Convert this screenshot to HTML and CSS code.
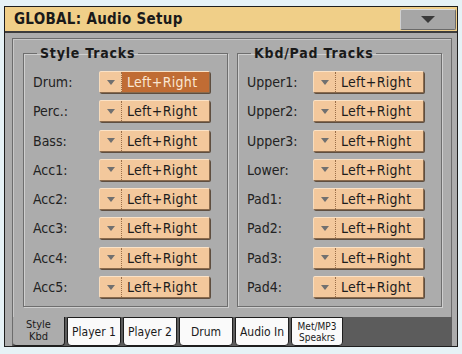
FILE: index.html
```html
<!DOCTYPE html>
<html lang="en">
<head>
    <meta charset="UTF-8">
    <meta name="viewport" content="width=device-width, initial-scale=1.0">
    <title>GLOBAL: Audio Setup</title>
    <link rel="stylesheet" href="styles.css">
</head>
<body>
    <div class="screen">
        <header class="titlebar">
            <h1 class="title">GLOBAL: Audio Setup</h1>
            <button class="menu-btn">
                <svg width="14" height="7" viewBox="0 0 14 7"><path d="M0 0H14L7 7Z" fill="#3a3a3a"/></svg>
            </button>
        </header>

        <div class="page">
            <fieldset class="group">
                <legend>Style Tracks</legend>
                <div class="row"><span class="label">Drum:</span><div class="select active"><span class="arrow"></span><span class="value">Left+Right</span></div></div>
                <div class="row"><span class="label">Perc.:</span><div class="select"><span class="arrow"></span><span class="value">Left+Right</span></div></div>
                <div class="row"><span class="label">Bass:</span><div class="select"><span class="arrow"></span><span class="value">Left+Right</span></div></div>
                <div class="row"><span class="label">Acc1:</span><div class="select"><span class="arrow"></span><span class="value">Left+Right</span></div></div>
                <div class="row"><span class="label">Acc2:</span><div class="select"><span class="arrow"></span><span class="value">Left+Right</span></div></div>
                <div class="row"><span class="label">Acc3:</span><div class="select"><span class="arrow"></span><span class="value">Left+Right</span></div></div>
                <div class="row"><span class="label">Acc4:</span><div class="select"><span class="arrow"></span><span class="value">Left+Right</span></div></div>
                <div class="row"><span class="label">Acc5:</span><div class="select"><span class="arrow"></span><span class="value">Left+Right</span></div></div>
            </fieldset>

            <fieldset class="group">
                <legend>Kbd/Pad Tracks</legend>
                <div class="row"><span class="label">Upper1:</span><div class="select"><span class="arrow"></span><span class="value">Left+Right</span></div></div>
                <div class="row"><span class="label">Upper2:</span><div class="select"><span class="arrow"></span><span class="value">Left+Right</span></div></div>
                <div class="row"><span class="label">Upper3:</span><div class="select"><span class="arrow"></span><span class="value">Left+Right</span></div></div>
                <div class="row"><span class="label">Lower:</span><div class="select"><span class="arrow"></span><span class="value">Left+Right</span></div></div>
                <div class="row"><span class="label">Pad1:</span><div class="select"><span class="arrow"></span><span class="value">Left+Right</span></div></div>
                <div class="row"><span class="label">Pad2:</span><div class="select"><span class="arrow"></span><span class="value">Left+Right</span></div></div>
                <div class="row"><span class="label">Pad3:</span><div class="select"><span class="arrow"></span><span class="value">Left+Right</span></div></div>
                <div class="row"><span class="label">Pad4:</span><div class="select"><span class="arrow"></span><span class="value">Left+Right</span></div></div>
            </fieldset>
        </div>

        <nav class="tabs">
            <div class="tab selected two-line">Style<br>Kbd</div>
            <div class="tab">Player 1</div>
            <div class="tab">Player 2</div>
            <div class="tab">Drum</div>
            <div class="tab">Audio In</div>
            <div class="tab small">Met/MP3<br>Speakrs</div>
        </nav>
    </div>
</body>
</html>
```

FILE: styles.css
```css
:root {
    --panel: #acacac;
    --title: #f0cf88;
    --peach: #f3c89c;
    --brown: #c06c34;
    --outline: #1e1e1e;
}

* {
    margin: 0;
    padding: 0;
    box-sizing: border-box;
    font-family: "DejaVu Sans Condensed", "DejaVu Sans", sans-serif;
    font-stretch: condensed;
}

body {
    background-color: #e6f2f6;
    color: #1a1a1a;
}

.screen {
    margin: 6px 0 0 4px;
    width: 454px;
    height: 341px;
    border: 1px solid var(--outline);
    background-color: var(--panel);
    display: flex;
    flex-direction: column;
}

.titlebar {
    height: 26px;
    background-color: var(--title);
    border-bottom: 2px solid #3c3c3c;
    display: flex;
    align-items: center;
    justify-content: space-between;
}

.title {
    font-size: 15px;
    font-weight: bold;
    padding-left: 9px;
    letter-spacing: 0.3px;
}

.menu-btn {
    width: 56px;
    height: 21px;
    margin-right: 1px;
    background-color: #a6a6a6;
    border: 1px solid #6a6a6a;
    border-top-color: #dcdcdc;
    border-left-color: #d0d0d0;
    border-radius: 2px;
    display: flex;
    align-items: center;
    justify-content: center;
}

.page {
    flex: 1;
    margin: 5px 5px 0 7px;
    border: 1px solid #6c6c6c;
    border-bottom: none;
    box-shadow: inset 1px 1px 0 #c8c8c8;
    display: flex;
    gap: 9px;
    padding: 6px 9px 0 10px;
}

.group {
    flex: 1;
    border: 1px solid #6e6e6e;
    box-shadow: 1px 1px 0 #cfcfcf, inset 1px 1px 0 #cfcfcf;
    padding: 9px 0 7px 9px;
    height: 262px;
    display: flex;
    flex-direction: column;
    gap: 7.3px;
}

.group legend {
    margin-left: 4px;
    padding: 0 3px;
    font-size: 14px;
    font-weight: bold;
    line-height: 17px;
    letter-spacing: 0.8px;
}

.row {
    display: flex;
    align-items: center;
    height: 22px;
}

.label {
    width: 66px;
    font-size: 14px;
    color: #222;
}

.select {
    width: 111px;
    height: 22px;
    display: flex;
    background-color: var(--peach);
    border: 1px solid #8a6a4c;
    border-top-color: #fbe2c6;
    border-left-color: #f8dcbc;
    border-radius: 2px;
    box-shadow: 1px 1px 0 #5e4e40;
}

.arrow {
    width: 22px;
    border-right: 1px dotted #9a6e48;
    display: flex;
    align-items: center;
    justify-content: center;
}

.arrow::before {
    content: "";
    border-left: 4px solid transparent;
    border-right: 4px solid transparent;
    border-top: 5px solid #707070;
}

.value {
    flex: 1;
    padding-left: 5px;
    font-size: 14px;
    line-height: 20px;
    color: #1c1c1c;
    letter-spacing: 0.3px;
}

.select.active .value {
    background-color: var(--brown);
    color: #fbe6d2;
}

.tabs {
    height: 29px;
    margin: 0 5px 0 7px;
    background-color: #5c5c5c;
    display: flex;
    gap: 2px;
}

.tab {
    width: 54px;
    background-color: #fafafa;
    border: 1px solid var(--outline);
    border-radius: 0 0 4px 4px;
    font-size: 12px;
    display: flex;
    align-items: center;
    justify-content: center;
    text-align: center;
}

.tab.selected {
    width: 53px;
    background-color: var(--panel);
    border-top: none;
    border-left-color: #6c6c6c;
}

.tab.two-line {
    font-size: 11px;
    line-height: 12px;
}

.tab.small {
    width: 52px;
    font-size: 10px;
    line-height: 11px;
}
```
